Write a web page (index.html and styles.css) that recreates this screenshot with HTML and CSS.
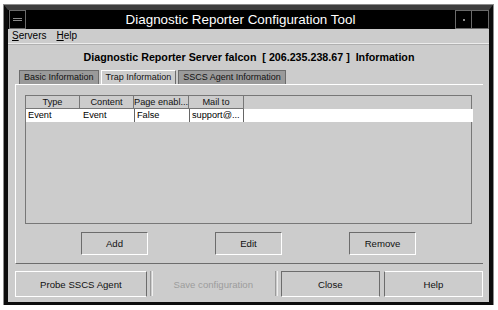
FILE: index.html
```html
<!DOCTYPE html>
<html>
<head>
<meta charset="utf-8">
<link rel="stylesheet" href="styles.css">
</head>
<body>
<div class="screen">
  <div class="window">
    <div class="titlebar">
      <span class="tb-btn tb-menu"><i></i><i></i></span>
      <span class="title">Diagnostic Reporter Configuration Tool</span>
      <span class="tb-btn tb-min"><i></i></span>
      <span class="tb-btn tb-max"></span>
    </div>
    <div class="menubar">
      <span class="menu-item"><u>S</u>ervers</span>
      <span class="menu-item"><u>H</u>elp</span>
    </div>
    <div class="content">
      <div class="heading">Diagnostic Reporter Server falcon&nbsp; [ 206.235.238.67 ]&nbsp; Information</div>
      <div class="tabs">
        <span class="tab">Basic Information</span>
        <span class="tab active">Trap Information</span>
        <span class="tab">SSCS Agent Information</span>
      </div>
      <div class="panel">
        <div class="table">
          <div class="thead">
            <span class="th c1">Type</span>
            <span class="th c2">Content</span>
            <span class="th c3">Page enabl...</span>
            <span class="th c4">Mail to</span>
          </div>
          <div class="row">
            <span class="td c1">Event</span>
            <span class="td c2">Event</span>
            <span class="td c3 sep">False</span>
            <span class="td c4 sep">support@...</span>
          </div>
        </div>
        <div class="actions">
          <button class="btn action">Add</button>
          <button class="btn action">Edit</button>
          <button class="btn action">Remove</button>
        </div>
      </div>
      <div class="footer">
        <button class="btn probe">Probe SSCS Agent</button>
        <span class="vsep"></span>
        <button class="btn save" disabled>Save configuration</button>
        <span class="vsep"></span>
        <button class="btn wide">Close</button>
        <button class="btn wide">Help</button>
      </div>
    </div>
  </div>
</div>
</body>
</html>
```
FILE: styles.css
```css
body {
  margin: 0;
  background: #ffffff;
  font-family: "Liberation Sans", Arial, sans-serif;
  color: #000;
  white-space: nowrap;
}
.screen {
  padding: 5px 0 0 4px;
}
.window {
  position: relative;
  width: 489px;
  height: 300px;
  box-sizing: border-box;
  border-style: solid;
  border-width: 5px 4px 3px 4px;
  border-color: #3e3e3e #0c0c0c #0c0c0c #0c0c0c;
  outline: 1px solid #8c8c8c;
  background: #cccccc;
  display: flex;
  flex-direction: column;
}
.titlebar {
  height: 19px;
  background: #000;
  display: flex;
  align-items: stretch;
}
.tb-btn {
  box-sizing: border-box;
  border: 1px solid #6a6a6a;
  width: 17px;
  display: flex;
  flex-direction: column;
  align-items: center;
  justify-content: center;
  gap: 1px;
}
.tb-menu {
  margin-left: 1px;
}
.tb-menu i {
  display: block;
  width: 9px;
  height: 1px;
  background: #8a8a8a;
}
.tb-min i {
  display: block;
  width: 2px;
  height: 2px;
  background: #8a8a8a;
}
.tb-max {
  border-left: none;
}
.title {
  flex: 1;
  color: #fff;
  font-size: 13.4px;
  text-align: center;
  line-height: 19px;
}
.menubar {
  height: 14px;
  display: flex;
  gap: 10px;
  padding-left: 4px;
  font-size: 10px;
  line-height: 13px;
  border-bottom: 1px solid #ececec;
  box-shadow: 0 1px 0 #b0b0b0;
}
.menu-item u {
  text-decoration: underline;
}
.content {
  flex: 1;
  display: flex;
  flex-direction: column;
  padding: 0 6px 0 7px;
}
.heading {
  font-weight: bold;
  font-size: 10.7px;
  text-align: center;
  margin-top: 6px;
  height: 14px;
  line-height: 14px;
}
.tabs {
  display: flex;
  margin-top: 6px;
  padding-left: 4px;
  gap: 2px;
  height: 14px;
  align-items: flex-end;
}
.tab {
  box-sizing: border-box;
  height: 14px;
  background: #9a9a9a;
  border: 1px solid #6c6c6c;
  border-bottom: none;
  font-size: 9px;
  line-height: 13px;
  padding: 0 4px;
  color: #111;
}
.tab.active {
  background: #cccccc;
  border-color: #fff #6c6c6c #fff #fff;
  padding: 0 4px;
}
.panel {
  border-top: 1px solid #fff;
  border-left: 1px solid #fff;
  border-bottom: 1px solid #6c6c6c;
  padding: 10px 11px 8px 9px;
  display: flex;
  flex-direction: column;
}
.table {
  height: 129px;
  box-sizing: border-box;
  border: 1px solid #777;
}
.thead, .row {
  display: flex;
  height: 13px;
  font-size: 9.2px;
  line-height: 12px;
}
.row {
  background: #fff;
  margin-right: -2px;
}
.th {
  box-sizing: border-box;
  border-right: 1px solid #777;
  border-bottom: 1px solid #777;
  text-align: center;
  color: #111;
  overflow: hidden;
}
.c1 { width: 54px; }
.c2 { width: 54px; }
.c3 { width: 55px; }
.c4 { width: 55px; }
.td {
  box-sizing: border-box;
  padding-left: 2px;
  overflow: hidden;
}
.td.sep {
  border-left: 1px solid #666;
}
.td.c4 {
  border-right: 1px solid #666;
}
.td.c2 { padding-left: 3px; }
.actions {
  display: flex;
  justify-content: center;
  gap: 67px;
  margin-top: 8px;
}
.btn {
  font-family: "Liberation Sans", Arial, sans-serif;
  font-size: 9.6px;
  color: #111;
  background: #cccccc;
  box-sizing: border-box;
  border: 1px solid;
  border-color: #6c6c6c #ffffff #ffffff #6c6c6c;
  padding: 0;
  margin: 0;
}
.action {
  width: 67px;
  height: 23px;
}
.footer {
  display: flex;
  align-items: stretch;
  margin-top: 7px;
  height: 26px;
}
.probe {
  width: 133px;
  border-color: #ffffff #6c6c6c #ffffff #ffffff;
}
.vsep {
  width: 1px;
  border-left: 1px solid #9a9a9a;
  border-right: 1px solid #efefef;
  margin: 0 2px 0 3px;
  height: 25px;
}
.save {
  width: 118px;
  border: none;
  color: #9c9c9c;
}
.wide {
  width: 100px;
  margin-left: 1px;
  border-color: #6c6c6c #6c6c6c #ffffff #6c6c6c;
}
.wide + .wide {
  margin-left: 4px;
  border-color: #ffffff #ffffff #ffffff #6c6c6c;
}
```
